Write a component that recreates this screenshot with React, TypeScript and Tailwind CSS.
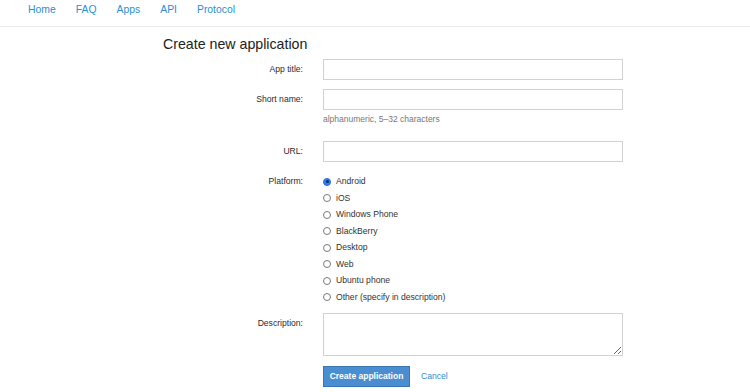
import React, { useState } from 'react';

const platforms = [
  'Android',
  'iOS',
  'Windows Phone',
  'BlackBerry',
  'Desktop',
  'Web',
  'Ubuntu phone',
  'Other (specify in description)',
];

const navLinks = ['Home', 'FAQ', 'Apps', 'API', 'Protocol'];

function Label({ children }: { children: React.ReactNode }) {
  return (
    <div className="w-[140px] h-[21px] flex items-center justify-end text-[8.6px] text-[#2b2b2b]">
      {children}
    </div>
  );
}

export default function App() {
  const [platform, setPlatform] = useState('Android');

  return (
    <div className="min-h-screen bg-white font-['Liberation_Sans',Arial,sans-serif]">
      {/* top nav */}
      <nav className="h-[27px] border-b border-[#ececec] flex items-center gap-[20px] pl-[28px] pb-[5px] text-[10.4px] text-[#2a8fd4]">
        {navLinks.map((l) => (
          <a key={l} href="#" className="leading-none">
            {l}
          </a>
        ))}
      </nav>

      <div className="pl-[163px]">
        <h1 className="mt-[9px] text-[14.2px] leading-[16px] text-[#222]">Create new application</h1>

        <div className="mt-[7px] flex flex-col">
          <div className="flex gap-[20px]">
            <Label>App title:</Label>
            <input className="w-[300px] h-[21px] border border-[#d2d2d2] outline-none" />
          </div>

          <div className="flex gap-[20px] mt-[9px]">
            <Label>Short name:</Label>
            <div>
              <input className="w-[300px] h-[21px] border border-[#d2d2d2] outline-none block" />
              <p className="mt-[4px] text-[8.5px] leading-[10px] text-[#777]">alphanumeric, 5–32 characters</p>
            </div>
          </div>

          <div className="flex gap-[20px] mt-[17px]">
            <Label>URL:</Label>
            <input className="w-[300px] h-[21px] border border-[#d2d2d2] outline-none" />
          </div>

          <div className="flex gap-[20px] mt-[11.5px]">
            <div className="w-[140px] h-[16.5px] flex items-center justify-end text-[8.6px] text-[#2b2b2b]">
              Platform:
            </div>
            <div className="flex flex-col">
              {platforms.map((p) => (
                <label
                  key={p}
                  onClick={() => setPlatform(p)}
                  className="h-[16.5px] flex items-center gap-[5px] text-[8.6px] text-[#333] cursor-pointer"
                >
                  {platform === p ? (
                    <span className="w-[8px] h-[8px] rounded-full bg-[#2f7df6] border border-[#2a6fd8] flex items-center justify-center">
                      <span className="w-[3px] h-[3px] rounded-full bg-[#0b2a66]" />
                    </span>
                  ) : (
                    <span className="w-[8px] h-[8px] rounded-full border border-[#7a7a7a] bg-white" />
                  )}
                  <span>{p}</span>
                </label>
              ))}
            </div>
          </div>

          <div className="flex gap-[20px] mt-[7px]">
            <Label>Description:</Label>
            <textarea className="w-[300px] h-[43px] border border-[#d2d2d2] outline-none" />
          </div>

          <div className="flex items-center mt-[10px] ml-[160px]">
            <button className="w-[87px] h-[21px] bg-[#4a8dd0] border border-[#3b77b6] text-white text-[8.5px] font-semibold">
              Create application
            </button>
            <a href="#" className="ml-[11px] text-[8.6px] text-[#2a8fd4]">
              Cancel
            </a>
          </div>
        </div>
      </div>
    </div>
  );
}
